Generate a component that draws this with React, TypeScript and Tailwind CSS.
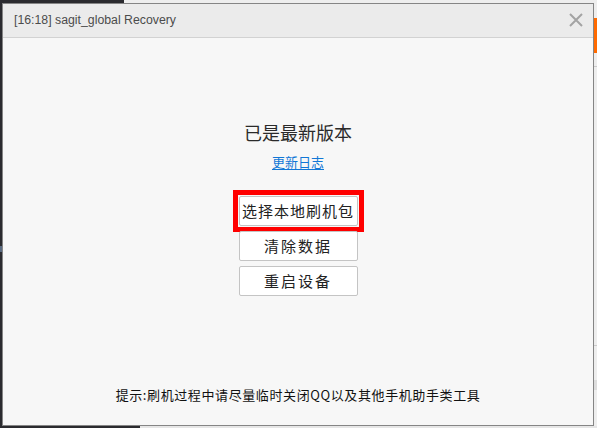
export default function App() {
  const actions = ["清除数据", "重启设备"];

  return (
    <div className="w-[597px] h-[428px] overflow-hidden flex flex-col bg-[#2b2b2f] font-['Noto_Sans_CJK_SC',sans-serif]">
      {/* desktop strip above the dialog */}
      <div className="h-[3px] flex shrink-0">
        <div className="w-[124px] bg-[#2b2b2f]" />
        <div className="flex-1 bg-[#eeeeee]" />
      </div>

      <div className="flex h-[423px] shrink-0">
        <div className="w-[2px] flex flex-col">
          <div className="mt-[243px] h-[6px] bg-[#5a6a80]" />
        </div>

        {/* dialog window */}
        <div className="w-[592px] border border-[#858585] bg-[#f7f7f7] flex flex-col">
          <div className="h-[34px] shrink-0 bg-[#ebebeb] border-b border-[#d2d2d2] flex items-center justify-between pl-[11px] pr-[10px]">
            <span className="text-[12.3px] text-[#4b4b4b] font-['Liberation_Sans',Arial,sans-serif]">
              [16:18] sagit_global Recovery
            </span>
            <svg width="14" height="14" viewBox="0 0 14 14" className="mt-[-1px]">
              <path d="M1 1 L13 13 M13 1 L1 13" stroke="#a3a3a3" strokeWidth="2" fill="none" />
            </svg>
          </div>

          <div className="flex-1 flex flex-col items-center pt-[82px] pb-[21px]">
            <h1 className="text-[18px] leading-[24px] text-[#2a2a2a] font-normal">已是最新版本</h1>
            <a className="mt-[9px] text-[13px] leading-[18px] text-[#1177d6] underline underline-offset-2">更新日志</a>

            <div className="mt-[25px] flex flex-col gap-[5px]">
              <div className="outline-[5px] outline-solid outline-offset-[1px] outline-[#ff0000]">
                <button className="block w-[119px] h-[30px] bg-white border border-[#c4c4c4] rounded-[2px] text-[15px] text-[#222] tracking-[1px]">
                  选择本地刷机包
                </button>
              </div>
              {actions.map((label) => (
                <button
                  key={label}
                  className="w-[119px] h-[30px] bg-white border border-[#c4c4c4] rounded-[2px] text-[15px] text-[#222] tracking-[2px]"
                >
                  {label}
                </button>
              ))}
            </div>

            <p className="mt-auto text-[13px] leading-[18px] text-[#111] tracking-[0.6px]">
              提示:刷机过程中请尽量临时关闭QQ以及其他手机助手类工具
            </p>
          </div>
        </div>

        {/* edge of the window behind */}
        <div className="w-[3px] bg-[#eeeeee] flex flex-col">
          <div className="mt-[15px] h-[35px] bg-[#ff6a00]" />
          <div className="mt-[13px] h-px bg-[#cccccc]" />
          <div className="mt-[278px] h-px bg-[#cccccc]" />
          <div className="mt-[34px] h-[10px] bg-[#dddddd]" />
        </div>
      </div>

      {/* desktop strip below the dialog */}
      <div className="flex-1 flex">
        <div className="w-[140px] bg-[#2b2b2f]" />
        <div className="flex-1 bg-[#e6e6e6]" />
      </div>
    </div>
  );
}
